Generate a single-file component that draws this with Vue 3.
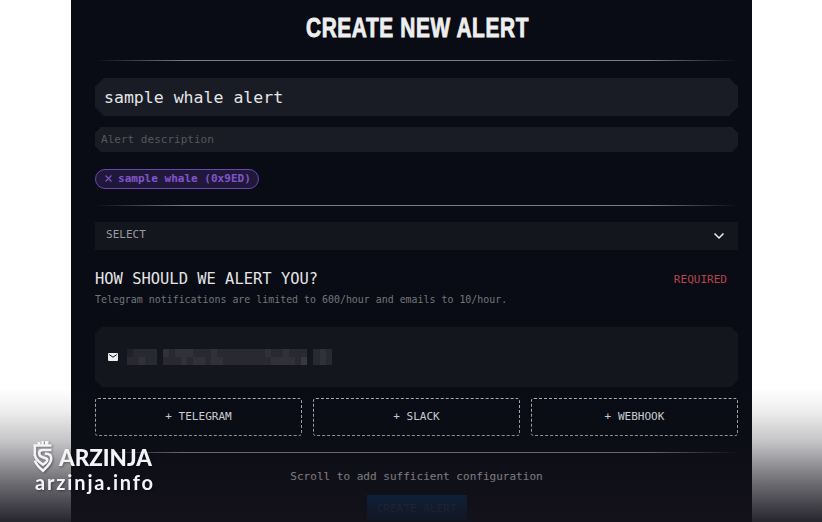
<template>
  <div class="stage">
    <main class="panel">
      <svg class="title" width="320" height="38" role="heading" aria-level="1">
        <text x="49" y="28" textLength="223" lengthAdjust="spacingAndGlyphs">CREATE NEW ALERT</text>
      </svg>
      <hr class="divider" />

      <div class="field field-name">{{ alertName }}</div>
      <div class="field field-description">Alert description</div>

      <div class="tag">
        <svg width="7" height="7" viewBox="0 0 7 7">
          <path d="M.5 .5l6 6M6.5 .5l-6 6" />
        </svg>
        <span>sample whale (0x9ED)</span>
      </div>
      <hr class="divider divider-tags" />

      <div class="select">
        <span>SELECT</span>
        <svg width="12" height="8" viewBox="0 0 12 8">
          <path d="M1.5 1.5L6 6l4.500-4.500" />
        </svg>
      </div>

      <div class="heading">
        <h2>HOW SHOULD WE ALERT YOU?</h2>
        <span class="required">REQUIRED</span>
      </div>
      <p class="hint">Telegram notifications are limited to 600/hour and emails to 10/hour.</p>

      <div class="email">
        <svg class="mail" width="10" height="8" viewBox="0 0 10 8">
          <rect width="10" height="8" rx="1" />
          <path d="M1.200 1.600L5 4.200l3.800-2.600" />
        </svg>
        <div class="redacted">
          <i v-for="(tone, i) in tones" :key="i" :style="{ background: shade(tone) }"></i>
        </div>
      </div>

      <div class="channels">
        <button v-for="channel in channels" :key="channel">+ {{ channel }}</button>
      </div>
      <hr class="divider divider-footer" />

      <p class="scroll-note">Scroll to add sufficient configuration</p>
      <button class="create">CREATE ALERT</button>
    </main>

    <div class="fade"></div>
    <svg class="brand" width="130" height="62" viewBox="0 0 130 62">
      <g class="mark">
        <path class="solid" d="M4.500 3h3v4h-3zM8.300 2h2.500v5H8.300zM12 2h3.500v5H12z" />
        <path d="M18.500 6.500H1.800V17" />
        <path d="M18.500 11H10c-5 0-5 5.800-.5 7.200l3.500 1.300c2.500 1.200 1.500 3-3 6.300C6 23 2.500 20.500 1.800 16" />
        <path d="M12 14.500c4 0 6.300 2 6.300 5 0 5-4.500 8.500-8.300 12.300-3.500-3.300-7-5.800-8-10.300" />
      </g>
      <text class="brand-name" x="26" y="27" textLength="93" lengthAdjust="spacingAndGlyphs">ARZINJA</text>
      <text class="brand-site" x="2" y="51" textLength="118">arzinja.info</text>
    </svg>
  </div>
</template>

<script setup>
import { ref } from 'vue'

const alertName = ref('sample whale alert')
const channels = ['TELEGRAM', 'SLACK', 'WEBHOOK']

// Brightness of each mosaic block, two rows of 34
const tones = [
  ...'1222203233322232222222232232220232',
  ...'2232202223233233222222223333240232'
].map(Number)

const shade = (tone) => {
  if (tone === 0) return 'transparent'
  const base = 25 + tone * 8
  return `rgb(${base}, ${base}, ${base + 8})`
}
</script>

<style>
body {
  margin: 0;
  background: #fff;
}
</style>

<style scoped>
.stage {
  position: relative;
  height: 522px;
  overflow: hidden;
  font-family: "DejaVu Sans Mono", monospace;
}

.panel {
  box-sizing: border-box;
  width: 681px;
  height: 522px;
  margin-left: 71px;
  padding: 9px 14px 0 24px;
  display: flex;
  flex-direction: column;
  background: #090c14;
}

.title {
  flex: none;
  align-self: center;
}

.title text {
  fill: #eee;
  stroke: #eee;
  stroke-width: 0.9px;
  letter-spacing: 0.8px;
  font: bold 27.5px "Liberation Sans Narrow", "Liberation Sans", sans-serif;
}

.divider {
  flex: none;
  width: 100%;
  height: 1px;
  margin: 13px 0 17px;
  border: 0;
  background: linear-gradient(90deg, transparent, #7b7e84 14%, #7b7e84 86%, transparent);
}

.field {
  flex: none;
  box-sizing: border-box;
  display: flex;
  align-items: center;
  background: #191c24;
}

.field-name {
  height: 38px;
  padding: 0 9px;
  color: #e4e5e6;
  font-size: 16.55px;
  clip-path: polygon(9px 0, calc(100% - 9px) 0, 100% 9px, 100% calc(100% - 9px), calc(100% - 9px) 100%, 9px 100%, 0 calc(100% - 9px), 0 9px);
}

.field-description {
  height: 25px;
  margin-top: 11px;
  padding: 0 6px;
  color: #55575c;
  font-size: 11.04px;
  clip-path: polygon(6px 0, calc(100% - 6px) 0, 100% 6px, 100% calc(100% - 6px), calc(100% - 6px) 100%, 6px 100%, 0 calc(100% - 6px), 0 6px);
}

.tag {
  flex: none;
  box-sizing: border-box;
  align-self: flex-start;
  display: flex;
  align-items: center;
  gap: 6px;
  width: 164px;
  height: 20px;
  margin-top: 17px;
  padding: 0 0 1px 9px;
  border: 1px solid #6c48ad;
  border-radius: 10px;
  background: #20183a;
  color: #8055c9;
  font-size: 11.04px;
  font-weight: bold;
  white-space: nowrap;
}

.tag path {
  stroke: #8055c9;
  stroke-width: 1.1;
}

.divider-tags {
  margin: 16px 0 16px;
}

.select {
  flex: none;
  box-sizing: border-box;
  display: flex;
  align-items: center;
  justify-content: space-between;
  height: 28px;
  padding: 0 13px 0 11px;
  background: #14161e;
  color: #999a9e;
  font-size: 11.04px;
}

.select span {
  padding-bottom: 4px;
}

.select path {
  fill: none;
  stroke: #eee;
  stroke-width: 1.5;
}

.heading {
  flex: none;
  display: flex;
  align-items: center;
  justify-content: space-between;
  height: 20px;
  margin-top: 19px;
  padding-right: 11px;
}

.heading h2 {
  margin: 0;
  color: #e4e5e6;
  font-size: 15.45px;
  font-weight: normal;
}

.required {
  padding-top: 1px;
  color: #b4454b;
  font-size: 11.04px;
}

.hint {
  flex: none;
  height: 12px;
  margin: 5px 0 0;
  color: #74767b;
  font-size: 9.93px;
  line-height: 12px;
}

.email {
  flex: none;
  box-sizing: border-box;
  display: flex;
  align-items: center;
  gap: 9px;
  height: 60px;
  margin-top: 21px;
  padding-left: 13px;
  background: #14161e;
  clip-path: polygon(7px 0, calc(100% - 7px) 0, 100% 7px, 100% calc(100% - 7px), calc(100% - 7px) 100%, 7px 100%, 0 calc(100% - 7px), 0 7px);
}

.mail rect {
  fill: #eee;
}

.mail path {
  fill: none;
  stroke: #14161e;
  stroke-width: 1;
}

.redacted {
  display: grid;
  grid-template-columns: repeat(34, 6.03px);
  grid-template-rows: 8px 8px;
}

.channels {
  flex: none;
  display: grid;
  grid-template-columns: repeat(3, 1fr);
  gap: 11px;
  margin-top: 11px;
}

.channels button {
  height: 38px;
  padding: 0 0 1px;
  border: 1px dashed #b0b1b4;
  border-radius: 3px;
  background: transparent;
  color: #dedfe1;
  font: 11.04px "DejaVu Sans Mono", monospace;
}

.divider-footer {
  margin: 16px 0 0;
  background: linear-gradient(90deg, transparent, #94979d 14%, #94979d 86%, transparent);
}

.scroll-note {
  flex: none;
  height: 14px;
  margin: 17px 0 0;
  color: #fff;
  font-size: 11.04px;
  line-height: 14px;
  text-align: center;
}

.create {
  flex: none;
  align-self: center;
  width: 100px;
  height: 26px;
  margin-top: 11px;
  padding: 0;
  border: 0;
  background: #00427c;
  color: #47687a;
  font: 11.04px "DejaVu Sans Mono", monospace;
}

/* Shade over the lower edge, behind the brand mark */
.fade {
  position: absolute;
  inset: 388px 0 0;
  background: linear-gradient(
    rgba(20, 18, 27, 0),
    rgba(20, 18, 27, 0.07) 17%,
    rgba(20, 18, 27, 0.25) 40%,
    rgba(20, 18, 27, 0.6) 69%,
    rgba(20, 18, 27, 0.92)
  );
}

.brand {
  position: absolute;
  left: 33px;
  top: 439px;
  filter: drop-shadow(1px 1px 1px rgba(0, 0, 0, 0.4));
}

.brand text {
  fill: #f4f4f8;
}

.brand-name {
  font: 900 23.5px Lato, sans-serif;
}

.brand-site {
  font: bold 20px Lato, sans-serif;
}

.mark path {
  fill: none;
  stroke: #f4f4f8;
  stroke-width: 2.6;
}

.mark .solid {
  fill: #f4f4f8;
  stroke: none;
}
</style>
